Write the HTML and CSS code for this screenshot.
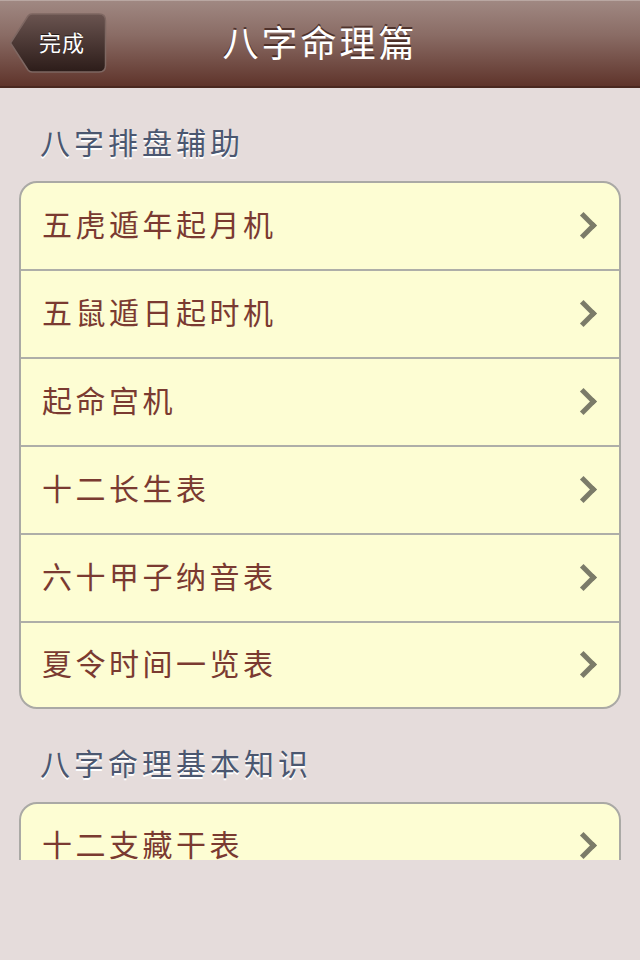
FILE: index.html
```html
<!DOCTYPE html>
<html lang="zh-CN">
<head>
  <meta charset="UTF-8" />
  <meta name="viewport" content="width=device-width, initial-scale=1.0"/>
  <title>八字命理篇</title>
  <link rel="stylesheet" href="styles.css">
</head>
<body>

<div class="navbar">
  <a href="#" class="back-btn">
    <svg class="back-shape" width="98" height="60" viewBox="0 0 98 60">
      <defs>
        <linearGradient id="backFill" x1="0" y1="0" x2="0" y2="1">
          <stop offset="0" stop-color="#6a5450"/>
          <stop offset="1" stop-color="#2c1c19"/>
        </linearGradient>
      </defs>
      <path d="M1.5 30 L19 3 Q20.5 1 23 1 H90 Q96.5 1 96.5 7.5 V52.5 Q96.5 59 90 59 H23 Q20.5 59 19 57 Z"
            fill="url(#backFill)" stroke="#7e6762" stroke-width="1.5"/>
    </svg>
    <span class="back-label">完成</span>
  </a>
  <h1 class="nav-title">八字命理篇</h1>
</div>

<div class="scroller">
  <h2 class="section-title">八字排盘辅助</h2>
  <ul class="group">
    <li class="row"><span>五虎遁年起月机</span><i class="chev"></i></li>
    <li class="row"><span>五鼠遁日起时机</span><i class="chev"></i></li>
    <li class="row"><span>起命宫机</span><i class="chev"></i></li>
    <li class="row"><span>十二长生表</span><i class="chev"></i></li>
    <li class="row"><span>六十甲子纳音表</span><i class="chev"></i></li>
    <li class="row"><span>夏令时间一览表</span><i class="chev"></i></li>
  </ul>

  <h2 class="section-title">八字命理基本知识</h2>
  <ul class="group">
    <li class="row"><span>十二支藏干表</span><i class="chev"></i></li>
  </ul>
</div>

</body>
</html>
```

FILE: styles.css
```css
body {
  margin: 0;
  width: 640px;
  height: 960px;
  background: #e5dcdb;
  font-family: "Noto Sans CJK SC", "Noto Sans", sans-serif;
  overflow: hidden;
}

/* top bar */
.navbar {
  position: relative;
  height: 85px;
  background: linear-gradient(to bottom, #a08882 0%, #8a6c65 40%, #5f342b 100%);
  border-top: 1px solid #b9a7a2;
  border-bottom: 2px solid #4a2820;
  display: flex;
  align-items: center;
  justify-content: center;
}
.back-btn {
  position: absolute;
  left: 9px;
  top: 12px;
  width: 98px;
  height: 60px;
  display: flex;
  align-items: center;
  text-decoration: none;
}
.back-shape {
  position: absolute;
  left: 0;
  top: 0;
}
.back-label {
  position: relative;
  margin: 0 0 4px 30px;
  color: #fff;
  font-size: 22px;
  letter-spacing: 1px;
  text-shadow: 0 -1px 0 rgba(0,0,0,0.6);
}
.nav-title {
  margin: 0 0 6px 0;
  color: #fff;
  font-size: 36px;
  font-weight: normal;
  letter-spacing: 3px;
  text-shadow: 0 -2px 0 rgba(58,30,24,0.75);
}

/* scrolling list */
.scroller {
  height: 772px;
  overflow: hidden;
  padding: 0 19px;
}
.section-title {
  margin: 36px 0 17px 21px;
  height: 40px;
  line-height: 34px;
  color: #4b5770;
  font-size: 30px;
  font-weight: normal;
  letter-spacing: 4px;
  text-shadow: 0 2px 0 #fff;
}
.group {
  list-style: none;
  margin: 0;
  padding: 0;
  background: #fdfdd3;
  border: 2px solid #aaa9a5;
  border-radius: 18px;
  overflow: hidden;
}
.row {
  height: 86px;
  display: flex;
  align-items: center;
  justify-content: space-between;
  padding: 0 22px 0 21px;
  border-bottom: 2px solid #aeaea8;
  color: #7a3a31;
  font-size: 30px;
  letter-spacing: 3.5px;
}
.row span {
  margin-bottom: 6px;
}
.row:last-child {
  border-bottom: none;
  height: 84px;
}
.chev {
  width: 14px;
  height: 14px;
  border-top: 5px solid #7b7b69;
  border-right: 5px solid #7b7b69;
  transform: rotate(45deg);
  margin: 0 4px 2px 0;
}
```
